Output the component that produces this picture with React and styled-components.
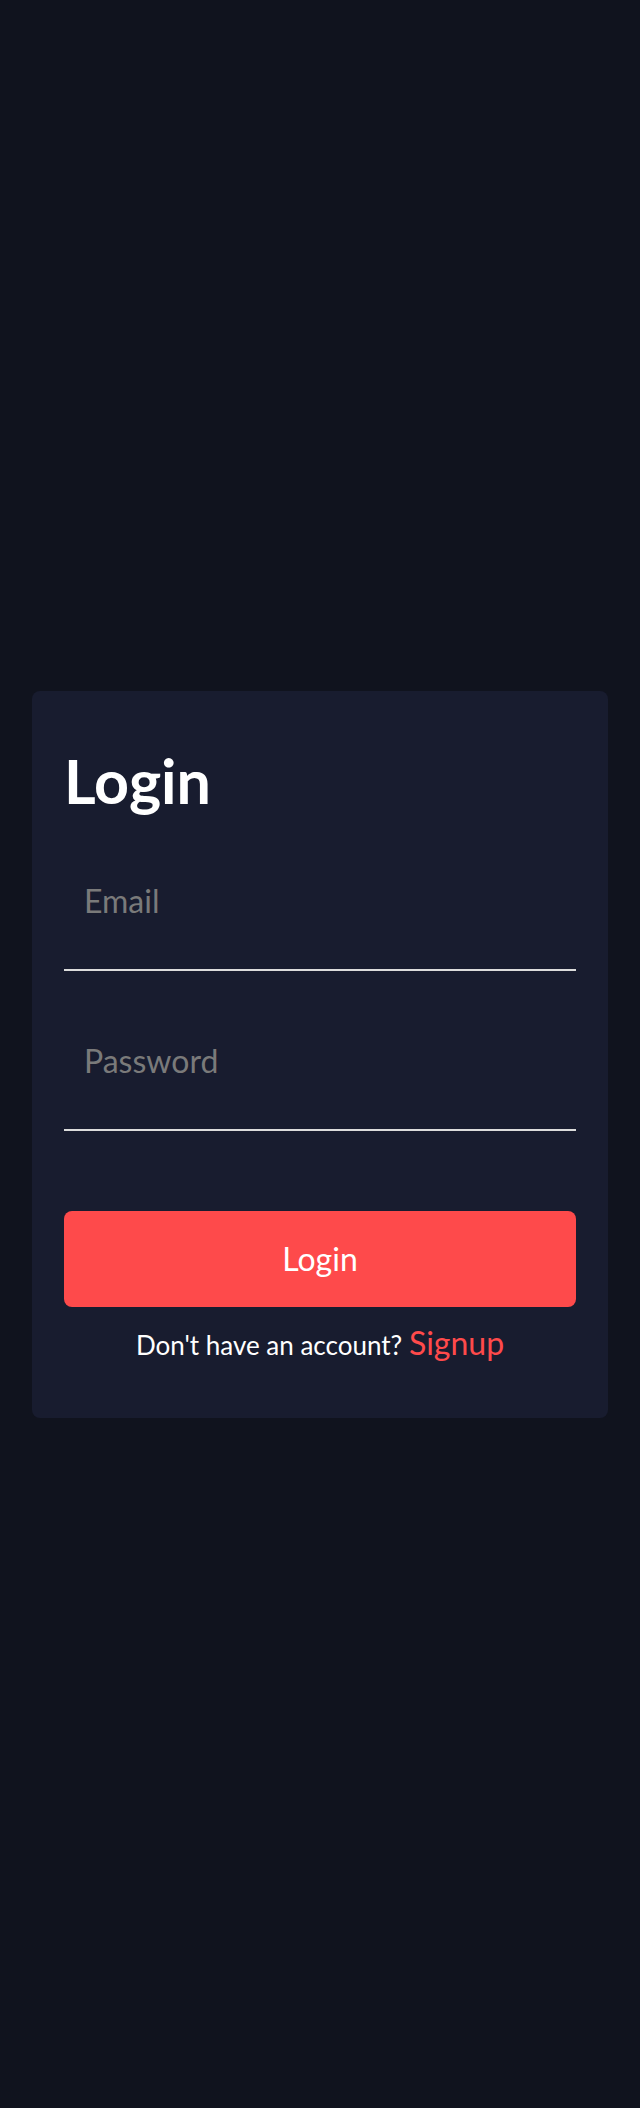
import React from 'react'
import styled, {createGlobalStyle} from 'styled-components'

const GlobalStyle = createGlobalStyle`
  * {
    box-sizing: border-box;
  }
  body {
    margin: 0;
    background: #10131e;
    font-family: Lato, "Open Sans", sans-serif;
  }
`

const Page = styled.div`
  min-height: 100vh;
  display: flex;
  align-items: center;
  justify-content: center;
`

const Card = styled.form`
  width: 90%;
  background: #181c2f;
  border-radius: 8px;
  padding: 32px 32px 55px;
  display: flex;
  flex-direction: column;
`

const Title = styled.h1`
  margin: 22px 0 16px;
  font-size: 61px;
  line-height: 72px;
  font-weight: 700;
  color: #fff;
`

const Field = styled.input`
  height: 138px;
  margin-bottom: ${p => p.$gap}px;
  padding: 0 20px;
  background: transparent;
  border: none;
  border-bottom: 2px solid #dcdcdc;
  outline: none;
  font-family: inherit;
  font-size: 32px;
  color: #fff;
  &::placeholder {
    color: #7a7a7a;
  }
`

const Button = styled.button`
  height: 96px;
  border: none;
  border-radius: 8px;
  background: #fe4a4b;
  color: #fff;
  font-family: inherit;
  font-size: 32px;
  cursor: pointer;
`

const Footer = styled.p`
  margin: 18px 0 0;
  text-align: center;
  font-size: 26px;
  line-height: 36px;
  color: #fff;
`

const SignupLink = styled.a`
  font-size: 32px;
  color: #fe4a4b;
  text-decoration: none;
`

export default function App() {
    return (
        <>
            <GlobalStyle/>
            <Page>
                <Card onSubmit={e => e.preventDefault()}>
                    <Title>Login</Title>
                    <Field type="email" placeholder="Email" $gap={22}/>
                    <Field type="password" placeholder="Password" $gap={80}/>
                    <Button type="submit">Login</Button>
                    <Footer>
                        Don't have an account? <SignupLink href="#">Signup</SignupLink>
                    </Footer>
                </Card>
            </Page>
        </>
    )
}
